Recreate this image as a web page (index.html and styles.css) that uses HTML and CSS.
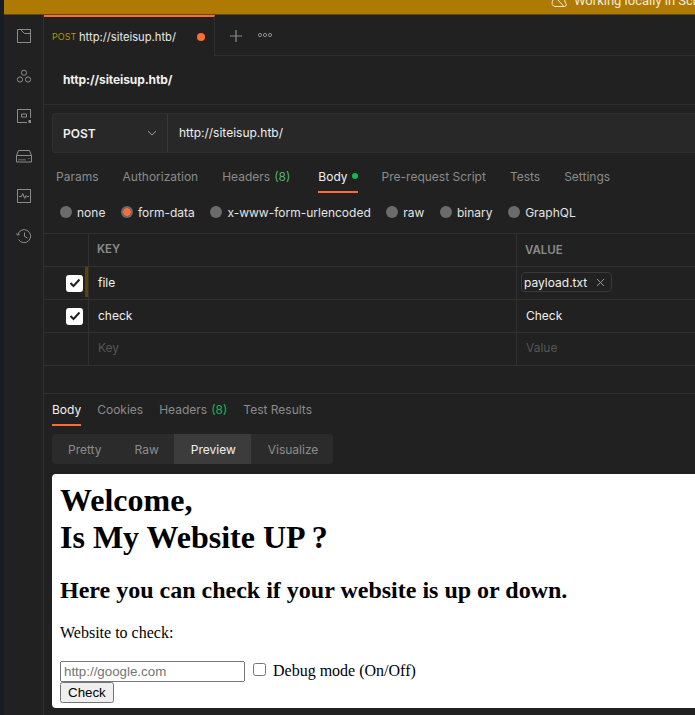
FILE: index.html
```html
<!DOCTYPE html>
<html lang="en">
<head>
  <meta charset="UTF-8" />
  <title>Postman - http://siteisup.htb/</title>
  <link rel="stylesheet" href="styles.css">
</head>
<body>
<div class="app">
  <div class="banner">
    <svg class="banner-icon" width="16" height="16" viewBox="0 0 16 16"><path d="M4 13.5h9.5a2 2 0 0 0 .5-3.9 4.5 4.5 0 0 0-8-3.6A3.5 3.5 0 0 0 4 13.5zM5 5l8 8.5" /></svg>
    <span>Working locally in Scratch Pad</span>
  </div>

  <div class="workspace">
    <nav class="sidebar">
      <svg class="side-icon" viewBox="0 0 16 16"><path d="M1.500 1.500h13v13h-13zM4.500 1.500l4 4h6" /></svg>
      <svg class="side-icon" viewBox="0 0 16 16"><circle cx="8" cy="4.700" r="2.600" /><circle cx="4" cy="11.500" r="2.600" /><circle cx="12" cy="11.500" r="2.600" /></svg>
      <svg class="side-icon" viewBox="0 0 16 16"><path d="M14.500 10V1.500h-13v13H11M5.500 6h5v3h-5z" /><path class="solid" d="M12.500 12H15v3h-2.500z" /></svg>
      <svg class="side-icon" viewBox="0 0 16 16"><path d="M.5 7.500l2-5h11l2 5v6.500H.5zM.5 7.500h15M3 12.500V11M5 12.500V11M7 12.500V11M9 12.500V11M12.500 10.500h1" /></svg>
      <svg class="side-icon" viewBox="0 0 16 16"><path d="M1.500 1.500h13v13h-13zM3 8.500h2.500l1.200-3 2 5 1.300-3 .7 1h2.300" /></svg>
      <svg class="side-icon" viewBox="0 0 16 16"><path d="M2.500 11.500a6.500 6.500 0 1 0-.8-4.500M.5 5.500l1.200 1.800 2-1.200M8.500 4.500v4l3 1.500" /></svg>
    </nav>

    <main class="main">
      <div class="tabstrip">
        <div class="tab">
          <span class="tab-method">POST</span>
          <span class="tab-url">http://siteisup.htb/</span>
          <span class="tab-dot"></span>
        </div>
        <svg class="tab-plus" width="14" height="14" viewBox="0 0 14 14"><path d="M7 1v12M1 7h12" /></svg>
        <svg class="tab-more" width="16" height="6" viewBox="0 0 16 6"><circle cx="3" cy="3" r="1.600" /><circle cx="8" cy="3" r="1.600" /><circle cx="13" cy="3" r="1.600" /></svg>
      </div>

      <div class="titlebar">http://siteisup.htb/</div>

      <div class="urlbar">
        <div class="method">
          <span>POST</span>
          <svg width="10" height="6" viewBox="0 0 10 6"><path d="M1 1l4 4 4-4" /></svg>
        </div>
        <div class="url">http://siteisup.htb/</div>
      </div>

      <div class="subtabs req-tabs">
        <span class="subtab">Params</span>
        <span class="subtab">Authorization</span>
        <span class="subtab">Headers <em class="count">(8)</em></span>
        <span class="subtab active body-tab">Body<i class="green-dot"></i></span>
        <span class="subtab">Pre-request Script</span>
        <span class="subtab">Tests</span>
        <span class="subtab">Settings</span>
      </div>

      <div class="radios">
        <span class="radio"><i class="knob"></i>none</span>
        <span class="radio"><i class="knob on"></i>form-data</span>
        <span class="radio"><i class="knob"></i>x-www-form-urlencoded</span>
        <span class="radio"><i class="knob"></i>raw</span>
        <span class="radio"><i class="knob"></i>binary</span>
        <span class="radio"><i class="knob"></i>GraphQL</span>
      </div>

      <div class="table">
        <div class="row head">
          <div class="cell check"></div>
          <div class="cell key">KEY</div>
          <div class="cell">VALUE</div>
        </div>
        <div class="row">
          <div class="cell check"><span class="box"><svg width="12" height="10" viewBox="0 0 12 10"><path d="M1.500 5l3 3 6-6.500" /></svg></span><i class="drag"></i></div>
          <div class="cell key">file</div>
          <div class="cell value"><span class="file-chip">payload.txt<svg width="9" height="9" viewBox="0 0 9 9"><path d="M1 1l7 7M8 1l-7 7" /></svg></span></div>
        </div>
        <div class="row">
          <div class="cell check"><span class="box"><svg width="12" height="10" viewBox="0 0 12 10"><path d="M1.500 5l3 3 6-6.500" /></svg></span></div>
          <div class="cell key">check</div>
          <div class="cell value">Check</div>
        </div>
        <div class="row blank">
          <div class="cell check"></div>
          <div class="cell key">Key</div>
          <div class="cell value">Value</div>
        </div>
      </div>

      <div class="response">
        <div class="subtabs res-tabs">
          <span class="subtab active">Body</span>
          <span class="subtab">Cookies</span>
          <span class="subtab">Headers <em class="count dark">(8)</em></span>
          <span class="subtab">Test Results</span>
        </div>
        <div class="segments">
          <span class="segment">Pretty</span>
          <span class="segment">Raw</span>
          <span class="segment current">Preview</span>
          <span class="segment">Visualize</span>
        </div>
        <div class="preview">
          <h1>Welcome,<br>Is My Website UP ?</h1>
          <h2>Here you can check if your website is up or down.</h2>
          <p>Website to check:</p>
          <form class="check-form">
            <input class="site-input" type="text" placeholder="http://google.com">
            <input class="debug" type="checkbox"> Debug mode (On/Off)<br>
            <input class="check-btn" type="button" value="Check">
          </form>
        </div>
      </div>
    </main>
  </div>
</div>
</body>
</html>
```

FILE: styles.css
```css
* { box-sizing: border-box; }
html, body { margin: 0; height: 100%; overflow: hidden; }
body { background: #1a1c24; font-family: Inter, "Noto Sans", sans-serif; font-size: 12px; color: #f0f0f0; }

.app { margin-left: 4px; height: 715px; display: flex; flex-direction: column; background: #212121; }

.banner { height: 15px; flex: none; background: #ae7a03; border-bottom: 1px solid #5e4a1a; display: flex; align-items: flex-end; overflow: hidden; padding: 0 0 6px 547px; gap: 7px; color: #f4ead6; font-family: Roboto, sans-serif; font-size: 13px; line-height: 15px; white-space: nowrap; }
.banner-icon { flex: none; margin-bottom: -1px; }
.banner-icon path { fill: none; stroke: #f4ead6; stroke-width: 1; }

.workspace { flex: 1; display: flex; min-height: 0; }

.sidebar { width: 40px; flex: none; border-right: 1px solid #303030; display: flex; flex-direction: column; align-items: center; padding: 13px 0 0 1px; gap: 24px; }
.side-icon { width: 16px; height: 16px; fill: none; stroke: #8c8c8c; stroke-width: 1; }
.side-icon .solid { fill: #8c8c8c; stroke: none; }

.main { flex: 1; min-width: 0; display: flex; flex-direction: column; }

.tabstrip { height: 41px; flex: none; display: flex; align-items: center; border-bottom: 1px solid #303030; }
.tab { width: 171px; height: 41px; display: flex; align-items: center; background: #212121; border-top: 2px solid #ff6c37; border-right: 1px solid #303030; padding-left: 8px; margin-bottom: -1px; }
.tab-method { color: #b8930f; font-size: 9px; width: 27px; }
.tab-url { font-size: 11.200px; color: #e8e8e8; }
.tab-dot { width: 8px; height: 8px; border-radius: 50%; background: #ff6c37; margin-left: auto; margin-right: 9px; }
.tab-plus { margin: 1px 0 0 14px; }
.tab-plus path { stroke: #8c8c8c; stroke-width: 1.200; fill: none; }
.tab-more { margin-left: 14px; }
.tab-more circle { fill: none; stroke: #8c8c8c; stroke-width: 1; }

.titlebar { height: 49px; flex: none; padding: 0 0 2px 19px; display: flex; align-items: center; font-weight: 700; font-size: 12px; letter-spacing: -0.100px; border-bottom: 1px solid #303030; color: #f0f0f0; }

.urlbar { height: 40px; flex: none; margin: 8px 0 0 8px; display: flex; background: #282828; border: 1px solid #303030; border-right: 0; border-radius: 4px 0 0 4px; }
.method { width: 115px; display: flex; align-items: center; justify-content: space-between; padding: 0 10px 0 10px; border-right: 1px solid #383838; font-weight: 600; }
.method svg path { fill: none; stroke: #9a9a9a; stroke-width: 1; }
.url { padding: 0 0 2px 11px; display: flex; align-items: center; }

.subtabs { display: flex; flex: none; color: #8b8b8b; }
.subtab { display: flex; align-items: center; gap: 4px; position: relative; white-space: nowrap; }
.subtab.active { color: #f0f0f0; }
.subtab.active::after { content: ""; position: absolute; left: 0; right: 0; bottom: 0; height: 2px; background: #ff6c37; }
.count { font-style: normal; color: #4fb36c; }
.count.dark { color: #0cbb52; }
.req-tabs { height: 38px; margin: 2px 0 0 12px; gap: 24px; }
.req-tabs .subtab { padding-top: 4px; }
.body-tab { margin-left: 4px; }
.green-dot { width: 6px; height: 6px; border-radius: 50%; background: #0cbb52; }

.radios { height: 40px; flex: none; padding: 0 0 2px 16px; display: flex; align-items: center; gap: 15.600px; color: #e4e4e4; }
.radio { display: flex; align-items: center; gap: 5px; }
.knob { width: 12px; height: 12px; border-radius: 50%; background: #6b6b6b; flex: none; }
.knob.on { background: radial-gradient(circle, #ff6c37 0 3.500px, #6b6b6b 4px); }

.table { flex: none; border-top: 1px solid #303030; }
.row { display: grid; grid-template-columns: 45px 428px 1fr; height: 33px; border-bottom: 1px solid #303030; }
.cell { display: flex; align-items: center; padding-left: 9px; border-right: 1px solid #303030; }
.cell:last-child { border-right: 0; }
.check { position: relative; padding-left: 22px; }
.key, .value { padding-bottom: 2px; }
.head .cell { font-weight: 600; font-size: 11.500px; color: #8b8b8b; padding-left: 8px; }
.head .key { padding-bottom: 2px; }
.blank .cell { color: #555; padding-bottom: 3px; }
.box { width: 17px; height: 17px; background: #fff; border-radius: 3px; display: flex; align-items: center; justify-content: center; }
.box path { fill: none; stroke: #212121; stroke-width: 2; }
.drag { position: absolute; right: 0; top: 0; bottom: 2px; width: 3px; background: #5e4200; }
.file-chip { display: flex; align-items: center; gap: 9px; height: 20px; padding: 0 6px 0 2px; margin-left: -5px; border: 1px solid #3a3a3a; border-radius: 4px; }
.file-chip path { fill: none; stroke: #9a9a9a; stroke-width: 1; }

.response { flex: 1; min-height: 0; margin-top: 27px; border-top: 1px solid #303030; padding-left: 8px; display: flex; flex-direction: column; }
.res-tabs { height: 32px; gap: 16px; }
.res-tabs .subtab { padding-bottom: 2px; }
.segments { flex: none; width: 281px; height: 30px; margin-top: 8px; display: flex; background: #2b2b2b; border-radius: 4px; overflow: hidden; color: #8b8b8b; }
.segment { display: flex; align-items: center; padding: 0 16px; }
.segment:first-child { padding-right: 17px; }
.segment:last-child { padding-left: 17px; }
.segment.current { background: #3c3c3c; color: #f0f0f0; margin-left: -1px; padding: 0 15px 0 17px; }

.preview { flex: none; height: 234px; margin-top: 10px; padding: 8px; background: #fff; color: #000; border-radius: 4px 0 0 4px; font-family: "Liberation Serif", serif; font-size: 16px; }
.preview h1 { margin: 0 0 21px; font-size: 32px; line-height: 37px; }
.preview h2 { margin: 0 0 20px; font-size: 24px; line-height: 27px; }
.preview p { margin: 0 0 18px; line-height: 18px; }
.check-form { line-height: 18px; }
.site-input { width: 185px; height: 21px; padding-left: 2px; }
.debug { margin: 3px 3px 3px 4px; }
.check-btn { height: 21px; }
```
